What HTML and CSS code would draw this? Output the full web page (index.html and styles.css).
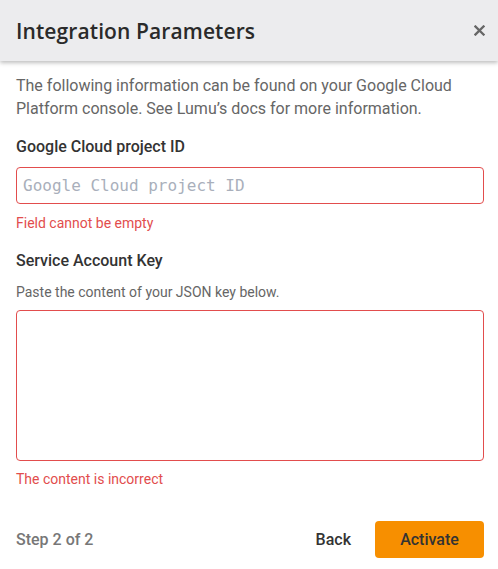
FILE: index.html
```html
<!DOCTYPE html>
<html lang="en">
<head>
  <meta charset="UTF-8">
  <title>Integration Parameters</title>
  <link rel="stylesheet" href="styles.css">
</head>
<body>

  <div class="modal">
    <div class="modal-header">
      <h1>Integration Parameters</h1>
      <button class="close-btn" aria-label="Close">
        <svg width="11" height="11" viewBox="0 0 11 11"><path d="M1.5 1.5 L9.5 9.5 M9.5 1.5 L1.5 9.5" stroke="#666" stroke-width="2.3" stroke-linecap="square"/></svg>
      </button>
    </div>

    <div class="modal-body">
      <p class="intro">The following information can be found on your Google Cloud Platform console. See Lumu’s docs for more information.</p>

      <label class="field-label" for="projectId">Google Cloud project ID</label>
      <input type="text" id="projectId" class="field error" placeholder="Google Cloud project ID">
      <div class="error-msg">Field cannot be empty</div>

      <label class="field-label second" for="accountKey">Service Account Key</label>
      <div class="hint">Paste the content of your JSON key below.</div>
      <textarea id="accountKey" class="field area error"></textarea>
      <div class="error-msg last">The content is incorrect</div>
    </div>

    <div class="modal-footer">
      <span class="step">Step 2 of 2</span>
      <div class="actions">
        <button class="btn-back">Back</button>
        <button class="btn-activate">Activate</button>
      </div>
    </div>
  </div>

</body>
</html>
```
FILE: styles.css
```css
body {
  margin: 0;
  background: #fff;
  font-family: Roboto, 'Liberation Sans', sans-serif;
  color: #333;
}

.modal {
  width: 498px;
  height: 569px;
  display: flex;
  flex-direction: column;
}

.modal-header {
  height: 61px;
  background-color: #ececee;
  box-shadow: 0 2px 4px rgba(0, 0, 0, 0.25);
  display: flex;
  align-items: center;
  justify-content: space-between;
  padding: 0 13px 0 16px;
  position: relative;
  z-index: 1;
}

.modal-header h1 {
  margin: 0;
  font-family: 'Open Sans', 'Noto Sans', sans-serif;
  font-size: 21px;
  font-weight: 600;
  color: #2a2a2a;
  letter-spacing: 0.1px;
}

.close-btn {
  background: none;
  border: none;
  padding: 0;
  width: 12px;
  height: 12px;
  display: flex;
  align-items: center;
  justify-content: center;
  cursor: pointer;
}

.modal-body {
  padding: 13px 14px 0 16px;
  display: flex;
  flex-direction: column;
}

.intro {
  margin: 0;
  font-size: 16px;
  line-height: 23px;
  color: #666;
}

.field-label {
  font-size: 16px;
  font-weight: 500;
  color: #333;
  margin-top: 16px;
  line-height: 22px;
}

.field-label.second {
  margin-top: 18px;
}

.field {
  margin-top: 9px;
  box-sizing: border-box;
  width: 468px;
  border: 1px solid #e24d4d;
  border-radius: 4px;
  outline: none;
  font-family: 'DejaVu Sans Mono', 'Liberation Mono', monospace;
  font-size: 16px;
  color: #333;
}

input.field {
  height: 37px;
  padding: 0 6px;
}

.field::placeholder {
  color: #a9afbb;
}

.area {
  height: 151px;
  resize: none;
  margin-top: 8px;
}

.hint {
  font-size: 14px;
  color: #666;
  margin-top: 11px;
  line-height: 19px;
}

.error-msg {
  font-size: 14px;
  color: #e24d4d;
  margin-top: 10px;
  line-height: 18px;
}

.error-msg.last {
  margin-top: 9px;
}

.modal-footer {
  margin-top: auto;
  padding: 0 14px 11px 16px;
  display: flex;
  align-items: center;
  justify-content: space-between;
}

.step {
  font-size: 16px;
  font-weight: 500;
  color: #777;
}

.actions {
  display: flex;
  align-items: center;
  gap: 24px;
}

.btn-back {
  background: none;
  border: none;
  padding: 0;
  font-family: inherit;
  font-size: 16px;
  font-weight: 500;
  color: #333;
  cursor: pointer;
}

.btn-activate {
  background-color: #f78f00;
  border: none;
  border-radius: 4px;
  width: 109px;
  height: 37px;
  font-family: inherit;
  font-size: 16px;
  font-weight: 500;
  color: #333;
  cursor: pointer;
}
```
